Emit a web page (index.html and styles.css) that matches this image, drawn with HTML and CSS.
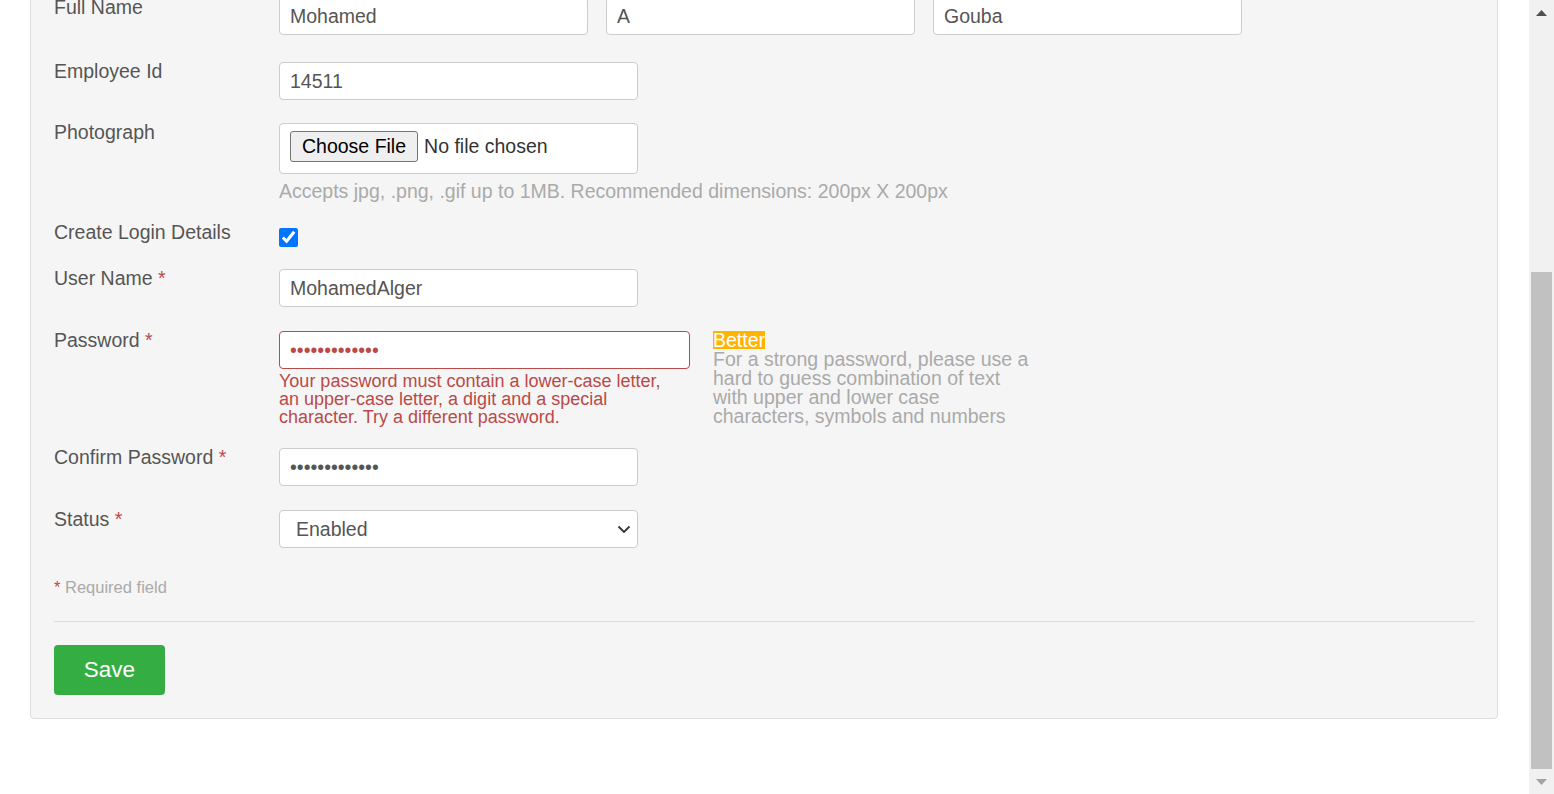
FILE: index.html
```html
<!DOCTYPE html>
<html>
<head>
<meta charset="utf-8">
<title>Employee</title>
<link rel="stylesheet" href="styles.css">
</head>
<body>
<div class="viewport">
  <form class="panel">
    <div class="form-row row-name">
      <label class="form-label label-name">Full Name</label>
      <div class="field name-fields">
        <input class="text-input name-input" type="text" value="Mohamed">
        <input class="text-input name-input" type="text" value="A">
        <input class="text-input name-input" type="text" value="Gouba">
      </div>
    </div>

    <div class="form-row row-emp">
      <label class="form-label">Employee Id</label>
      <div class="field">
        <input class="text-input wide-input" type="text" value="14511">
      </div>
    </div>

    <div class="form-row row-photo">
      <label class="form-label">Photograph</label>
      <div class="field">
        <div class="file-box">
          <span class="file-btn">Choose File</span>
          <span class="file-text">No file chosen</span>
        </div>
        <div class="help-text">Accepts jpg, .png, .gif up to 1MB. Recommended dimensions: 200px X 200px</div>
      </div>
    </div>

    <div class="form-row row-login">
      <label class="form-label">Create Login Details</label>
      <div class="field">
        <input class="check" type="checkbox" checked>
      </div>
    </div>

    <div class="form-row row-user">
      <label class="form-label">User Name <span class="req">*</span></label>
      <div class="field">
        <input class="text-input wide-input" type="text" value="MohamedAlger">
      </div>
    </div>

    <div class="form-row row-pass">
      <label class="form-label">Password <span class="req">*</span></label>
      <div class="field pass-field">
        <div class="pass-col">
          <input class="text-input pass-input error-input" type="password" value="abcdefghijklm">
          <div class="error-text">Your password must contain a lower-case letter, an upper-case letter, a digit and a special character. Try a different password.</div>
        </div>
        <div class="strength-col">
          <div class="strength-line"><span class="strength-badge">Better</span></div>
          <div class="strength-help">For a strong password, please use a hard to guess combination of text with upper and lower case characters, symbols and numbers</div>
        </div>
      </div>
    </div>

    <div class="form-row row-confirm">
      <label class="form-label">Confirm Password <span class="req">*</span></label>
      <div class="field">
        <input class="text-input wide-input" type="password" value="abcdefghijklm">
      </div>
    </div>

    <div class="form-row row-status">
      <label class="form-label">Status <span class="req">*</span></label>
      <div class="field">
        <div class="select-wrap">
          <select class="select-input">
            <option>Enabled</option>
            <option>Disabled</option>
          </select>
          <svg class="chevron" width="14" height="9" viewBox="0 0 14 9"><path d="M1.5 1.5 L7 7 L12.5 1.5" fill="none" stroke="#333" stroke-width="1.8"/></svg>
        </div>
      </div>
    </div>

    <div class="required-note"><span class="req">*</span> Required field</div>
    <div class="divider"></div>
    <button class="save-btn" type="button">Save</button>
  </form>
</div>
<div class="scrollbar">
  <div class="sb-btn"><svg width="11" height="6" viewBox="0 0 11 6"><path d="M0 6 L5.5 0 L11 6 Z" fill="#505050"/></svg></div>
  <div class="sb-track"><div class="sb-thumb"></div></div>
  <div class="sb-btn"><svg width="11" height="6" viewBox="0 0 11 6"><path d="M0 0 L5.5 6 L11 0 Z" fill="#a3a3a3"/></svg></div>
</div>
</body>
</html>
```

FILE: styles.css
```css
* { box-sizing: border-box; }
html, body { margin: 0; height: 100%; overflow: hidden; }
body {
  display: flex;
  background: #fff;
  font-family: "Liberation Sans", Arial, sans-serif;
  font-size: 19.5px;
  color: #555;
}
.viewport { flex: 1; min-width: 0; overflow: hidden; }
.panel {
  margin: -28px 31px 0 30px;
  background: #f5f5f5;
  border: 1px solid #ddd;
  border-radius: 4px;
  padding: 24px 22px 23px 23px;
}
.form-row { display: flex; align-items: flex-start; }
.form-label { width: 225px; flex: none; line-height: 20px; margin-top: -1px; }
.label-name { margin-top: 0; }
.row-login .form-label { margin-top: -2px; }
.field { flex: none; }
.req { color: #b94a48; }

.row-name { margin-bottom: 27px; }
.row-emp { margin-bottom: 23px; }
.row-photo { margin-bottom: 23px; }
.row-login { margin-bottom: 22px; }
.row-user { margin-bottom: 24px; }
.row-pass { margin-bottom: 22px; }
.row-confirm { margin-bottom: 24px; }
.row-status { margin-bottom: 29px; }

.text-input {
  display: block;
  height: 38px;
  border: 1px solid #ccc;
  border-radius: 4px;
  background: #fff;
  padding: 0 10px;
  font: inherit;
  color: #555;
  outline: none;
}
.name-fields { display: flex; gap: 18px; }
.name-input { width: 309px; }
.wide-input { width: 359px; }

.file-box {
  width: 359px;
  height: 51px;
  border: 1px solid #ccc;
  border-radius: 4px;
  background: #fff;
  padding: 7px 10px 11px;
  display: flex;
  align-items: center;
  gap: 6px;
}
.file-btn {
  display: inline-block;
  height: 31px;
  line-height: 29px;
  padding: 0 11px;
  background: #efefef;
  border: 1px solid #767676;
  border-radius: 3px;
  color: #000;
}
.file-text { color: #333; }
.help-text { margin-top: 7px; line-height: 20px; color: #aaa; white-space: nowrap; }

.check {
  display: block;
  width: 19px;
  height: 19px;
  margin: 4px 0 0;
  accent-color: #0075ff;
}

.pass-field { display: flex; gap: 23px; }
.pass-col { width: 411px; }
.pass-input { width: 411px; }
.error-input { border-color: #b94a48; color: #b94a48; }
.error-text {
  font-size: 18px;
  line-height: 18px;
  color: #b94a48;
  padding: 3px 16px 0 0;
}
.strength-col { width: 320px; color: #aaa; }
.strength-line { height: 18px; line-height: 18px; }
.strength-badge {
  display: inline-block;
  background: #ffb400;
  color: #fff;
  line-height: 18px;
  vertical-align: top;
}
.strength-help { line-height: 19px; padding-top: 1px; }

.select-wrap { position: relative; width: 359px; }
.select-input {
  display: block;
  width: 359px;
  height: 38px;
  border: 1px solid #ccc;
  border-radius: 4px;
  background: #fff;
  padding: 0 16px;
  font: inherit;
  color: #555;
  appearance: none;
  -webkit-appearance: none;
  outline: none;
}
.chevron { position: absolute; right: 7px; top: 15px; pointer-events: none; }

.required-note { font-size: 16.5px; line-height: 20px; color: #aaa; }
.divider { margin-top: 24px; border-top: 1px solid #ddd; }
.save-btn {
  display: block;
  margin-top: 23px;
  width: 111px;
  height: 50px;
  padding: 0;
  border: 0;
  border-radius: 4px;
  background: #34ad42;
  color: #fff;
  font: inherit;
  font-size: 22.5px;
}

.scrollbar {
  width: 25px;
  flex: none;
  background: #f1f1f1;
  display: flex;
  flex-direction: column;
}
.sb-btn { height: 25px; display: flex; align-items: center; justify-content: center; }
.sb-track {
  flex: 1;
  display: flex;
  flex-direction: column;
  justify-content: flex-end;
  padding: 0 2px;
}
.sb-thumb { height: 497px; background: #c1c1c1; }
```
